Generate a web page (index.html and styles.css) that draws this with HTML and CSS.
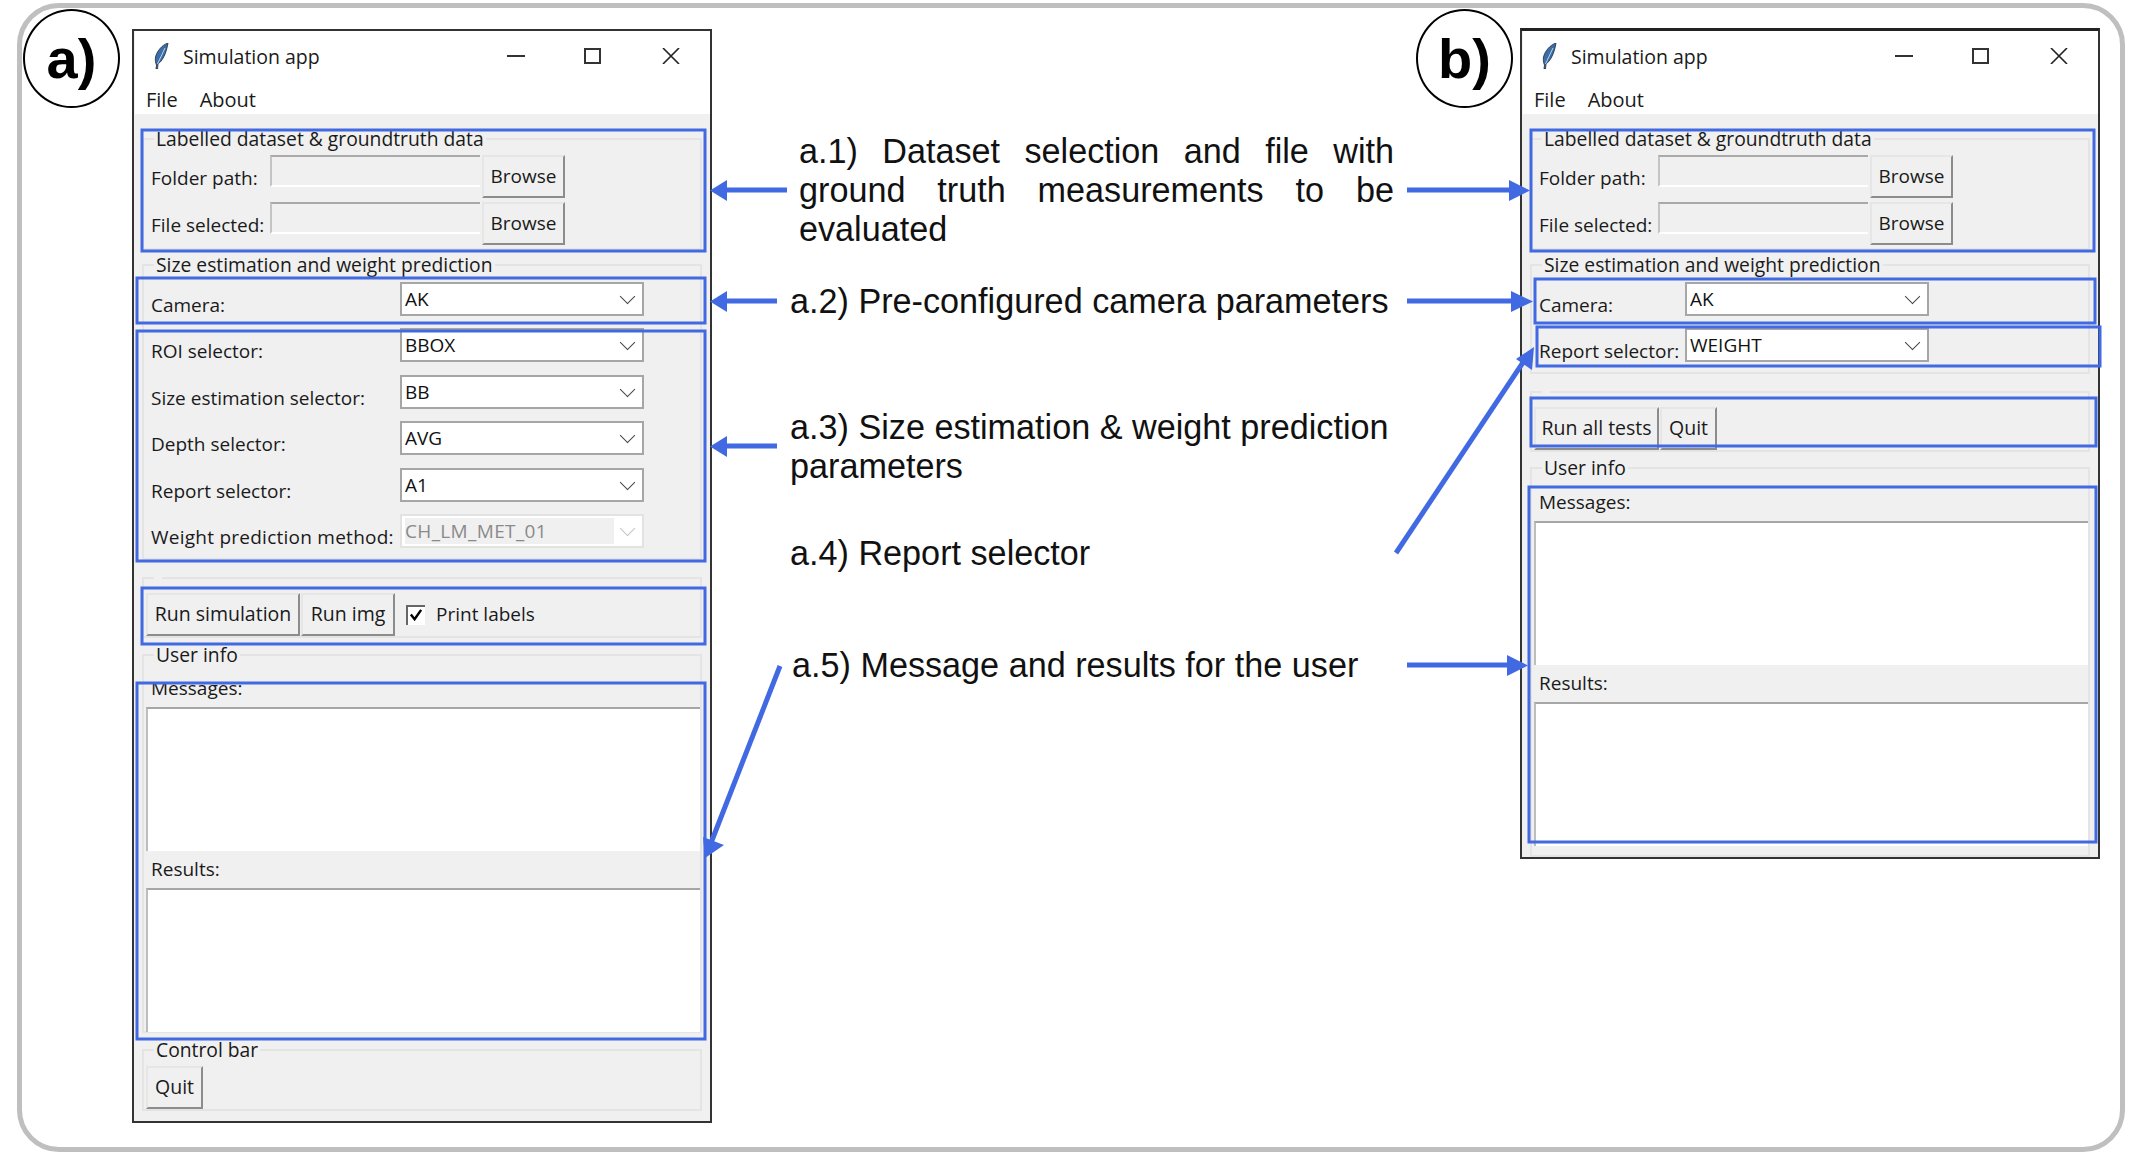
FILE: index.html
```html
<!DOCTYPE html>
<html lang="en">
<head>
    <meta charset="UTF-8">
    <title>Simulation app</title>
    <link rel="stylesheet" href="styles.css">
</head>
<body>
    <div class="figure">
        <div class="badge badge-a">a)</div>

        <!-- Window a: full simulation -->
        <div class="window window-a">
            <div class="title-bar">
                <svg class="feather" viewBox="0 0 15 26"><path d="M14 0C8 2 3 8 1.5 14 1 17 1.5 20 2.5 22L2 26H3.5L4 21C8 18 12 12 14 0Z" fill="#3b6ea8" stroke="#1c2b3a" stroke-width=".8"/><path d="M11 5 3.5 21" stroke="#b9d2ea" stroke-width="1"/></svg>
                <span class="title-text">Simulation app</span>
                <span class="win-btn win-min"></span>
                <span class="win-btn win-max"></span>
                <svg class="win-close" viewBox="0 0 18 16"><path d="M1 0 17 16M17 0 1 16" stroke="#222" stroke-width="1.6" fill="none"/></svg>
            </div>
            <div class="menu-bar"><span>File</span><span>About</span></div>

            <fieldset class="group group-dataset">
                <legend>Labelled dataset &amp; groundtruth data</legend>
                <div class="path-row">
                    <span class="field-label">Folder path:</span>
                    <span class="entry"></span>
                    <button class="btn btn-browse">Browse</button>
                </div>
                <div class="path-row">
                    <span class="field-label">File selected:</span>
                    <span class="entry"></span>
                    <button class="btn btn-browse">Browse</button>
                </div>
            </fieldset>

            <fieldset class="group group-size">
                <legend>Size estimation and weight prediction</legend>
                <div class="form-row">
                    <span class="field-label">Camera:</span>
                    <span class="combo">AK</span>
                </div>
                <div class="form-row">
                    <span class="field-label">ROI selector:</span>
                    <span class="combo">BBOX</span>
                </div>
                <div class="form-row">
                    <span class="field-label">Size estimation selector:</span>
                    <span class="combo">BB</span>
                </div>
                <div class="form-row">
                    <span class="field-label">Depth selector:</span>
                    <span class="combo">AVG</span>
                </div>
                <div class="form-row">
                    <span class="field-label">Report selector:</span>
                    <span class="combo">A1</span>
                </div>
                <div class="form-row">
                    <span class="field-label label-wide">Weight prediction method:</span>
                    <span class="combo combo-disabled"><span class="combo-value">CH_LM_MET_01</span></span>
                </div>
            </fieldset>

            <fieldset class="group group-run">
                <legend class="legend-empty"></legend>
                <div class="button-row">
                    <button class="btn btn-run-sim">Run simulation</button>
                    <button class="btn btn-run-img">Run img</button>
                    <span class="check-box"><svg viewBox="0 0 15 15"><path d="M2 7 6 12 13 2" stroke="#000" stroke-width="2.6" fill="none"/></svg></span>
                    <span class="check-label">Print labels</span>
                </div>
            </fieldset>

            <fieldset class="group group-info">
                <legend>User info</legend>
                <div class="text-label">Messages:</div>
                <div class="text-box"></div>
                <div class="text-label text-label-next">Results:</div>
                <div class="text-box"></div>
            </fieldset>

            <fieldset class="group group-control">
                <legend>Control bar</legend>
                <button class="btn btn-quit">Quit</button>
            </fieldset>
        </div>

        <!-- Notes between the windows -->
        <div class="notes">
            <p class="note note-1">a.1) Dataset selection and file with ground truth measurements to be evaluated</p>
            <p class="note note-2">a.2) Pre-configured camera parameters</p>
            <p class="note note-3">a.3) Size estimation &amp; weight prediction parameters</p>
            <p class="note note-4">a.4) Report selector</p>
            <p class="note note-5">a.5) Message and results for the user</p>
        </div>

        <div class="badge badge-b">b)</div>

        <!-- Window b: run all tests -->
        <div class="window window-b">
            <div class="title-bar">
                <svg class="feather" viewBox="0 0 15 26"><path d="M14 0C8 2 3 8 1.5 14 1 17 1.5 20 2.5 22L2 26H3.5L4 21C8 18 12 12 14 0Z" fill="#3b6ea8" stroke="#1c2b3a" stroke-width=".8"/><path d="M11 5 3.5 21" stroke="#b9d2ea" stroke-width="1"/></svg>
                <span class="title-text">Simulation app</span>
                <span class="win-btn win-min"></span>
                <span class="win-btn win-max"></span>
                <svg class="win-close" viewBox="0 0 18 16"><path d="M1 0 17 16M17 0 1 16" stroke="#222" stroke-width="1.6" fill="none"/></svg>
            </div>
            <div class="menu-bar"><span>File</span><span>About</span></div>

            <fieldset class="group group-dataset">
                <legend>Labelled dataset &amp; groundtruth data</legend>
                <div class="path-row">
                    <span class="field-label">Folder path:</span>
                    <span class="entry"></span>
                    <button class="btn btn-browse">Browse</button>
                </div>
                <div class="path-row">
                    <span class="field-label">File selected:</span>
                    <span class="entry"></span>
                    <button class="btn btn-browse">Browse</button>
                </div>
            </fieldset>

            <fieldset class="group group-size">
                <legend>Size estimation and weight prediction</legend>
                <div class="form-row">
                    <span class="field-label">Camera:</span>
                    <span class="combo">AK</span>
                </div>
                <div class="form-row">
                    <span class="field-label">Report selector:</span>
                    <span class="combo">WEIGHT</span>
                </div>
            </fieldset>

            <fieldset class="group group-run">
                <legend class="legend-empty"></legend>
                <div class="button-row">
                    <button class="btn btn-run-all">Run all tests</button>
                    <button class="btn btn-quit-small">Quit</button>
                </div>
            </fieldset>

            <fieldset class="group group-info">
                <legend>User info</legend>
                <div class="text-label">Messages:</div>
                <div class="text-box"></div>
                <div class="text-label text-label-next">Results:</div>
                <div class="text-box"></div>
            </fieldset>
        </div>
    </div>

    <!-- Blue callouts drawn over everything, in page coordinates -->
    <svg class="callouts" viewBox="0 0 2140 1167">
        <g class="callout-boxes">
            <rect x="142" y="130" width="563" height="121"/>
            <rect x="137" y="278" width="568" height="45"/>
            <rect x="137" y="331" width="568" height="230"/>
            <rect x="142" y="588" width="563" height="56"/>
            <rect x="137" y="683" width="568" height="356"/>
            <rect x="1531" y="130" width="563" height="121"/>
            <rect x="1535" y="279" width="560" height="44"/>
            <rect x="1537" y="327" width="563" height="39"/>
            <rect x="1531" y="398" width="565" height="48"/>
            <rect x="1529" y="487" width="567" height="355"/>
        </g>
        <g class="callout-lines">
            <path d="M725 190H787"/>
            <path d="M725 301H777"/>
            <path d="M725 446H777"/>
            <path d="M1407 190H1512"/>
            <path d="M1407 301H1514"/>
            <path d="M1407 665H1510"/>
            <path d="M1396 553 1526 358"/>
            <path d="M780 666 709 848"/>
        </g>
        <g class="callout-heads">
            <polygon points="710,190.500 727,180 727,201"/>
            <polygon points="710,301.500 727,291 727,312"/>
            <polygon points="710,446.500 727,436 727,457"/>
            <polygon points="1530,190.500 1509,180 1509,201"/>
            <polygon points="1533,301.500 1511,291 1511,312"/>
            <polygon points="1528,665.500 1507,655 1507,676"/>
            <polygon points="1534,347 1516,359 1532,370"/>
            <polygon points="705,858 703,837 724,845"/>
        </g>
    </svg>
</body>
</html>
```

FILE: styles.css
```css
* {
    box-sizing: border-box;
}

body {
    margin: 0;
    position: relative;
    width: 2140px;
    height: 1167px;
    overflow: hidden;
    background-color: #fff;
    font-family: "Open Sans", "Noto Sans", sans-serif;
    font-size: 19px;
    color: #1a1a1a;
}

/* Outer rounded frame */
.figure {
    display: flex;
    align-items: flex-start;
    width: 2108px;
    height: 1149px;
    margin: 3px 0 0 17px;
    padding-left: 1px;
    border: 5px solid #bfbfbf;
    border-radius: 42px;
}

.badge {
    flex: none;
    width: 97px;
    height: 99px;
    margin-top: 1px;
    border: 2px solid #000;
    border-radius: 50%;
    display: flex;
    align-items: center;
    justify-content: center;
    font-family: "Liberation Sans", sans-serif;
    font-weight: bold;
    font-size: 56px;
    color: #000;
}

/* Windows */
.window {
    flex: none;
    width: 580px;
    padding-left: 1px;
    border: 2px solid #333;
    background-color: #f0f0f0;
}

.window-a {
    height: 1094px;
    margin: 21px 0 0 12px;
}

.window-b {
    height: 831px;
    margin: 20px 0 0 7px;
    border-top-width: 3px;
    border-top-color: #222;
}

.title-bar {
    display: flex;
    align-items: center;
    height: 50px;
    padding-left: 19px;
    background-color: #fff;
    font-size: 19.500px;
}

.feather {
    width: 15px;
    height: 26px;
    margin-right: 14px;
}

.title-text {
    width: 324px;
}

.win-btn {
    display: block;
}

.win-min {
    width: 18px;
    height: 2px;
    background-color: #333;
}

.win-max {
    width: 17px;
    height: 16px;
    margin-left: 59px;
    border: 2px solid #333;
}

.win-close {
    width: 18px;
    height: 16px;
    margin-left: 61px;
}

.menu-bar {
    display: flex;
    gap: 22px;
    height: 33px;
    padding: 6px 0 0 11px;
    line-height: 26px;
    font-size: 20px;
    background-color: #fff;
}

/* Labelled frames */
.group {
    display: block;
    min-width: 0;
    width: 560px;
    margin: 0 0 0 7px;
    padding: 0;
    border: 2px solid #e4e4e4;
}

.group legend {
    height: 20px;
    margin-left: 8px;
    padding: 0 2px;
    font-size: 19.300px;
    line-height: 19px;
}

.group-dataset legend,
.group-size legend {
    margin-left: 3px;
}

.group legend.legend-empty {
    width: 8px;
    padding: 0;
}

.group-dataset {
    height: 121px;
    margin-top: 15px;
    padding: 6px 0 0 7px;
}

.group-size {
    margin-top: 5px;
    padding: 7px 0 0 7px;
}

.window-a .group-size {
    height: 305px;
}

.window-b .group-size {
    height: 119px;
}

.group-run {
    height: 70px;
    margin-top: 8px;
    padding: 5px 0 0 2px;
}

.group-info {
    padding: 0 0 0 2px;
}

.window-a .group-info {
    height: 388px;
    margin-top: 7px;
}

.window-b .group-info {
    height: 399px;
    margin-top: 6px;
}

.group-control {
    height: 71px;
    margin-top: 7px;
    padding: 6px 0 0 2px;
}

/* Form rows */
.path-row {
    display: flex;
    align-items: flex-start;
    height: 44px;
    margin-bottom: 3px;
}

.form-row {
    display: flex;
    align-items: flex-start;
    height: 46.400px;
}

.field-label {
    flex: none;
    padding-top: 13px;
    line-height: 20px;
    white-space: nowrap;
}

.label-wide {
    letter-spacing: .25px;
}

.path-row .field-label {
    width: 119px;
}

.window-a .form-row .field-label {
    width: 249px;
}

.window-b .form-row .field-label {
    width: 146px;
}

.entry {
    display: block;
    width: 210px;
    height: 32px;
    margin-right: 2px;
    background-color: #f0f0f0;
    border-top: 2px solid #a9a9a9;
    border-left: 2px solid #c4c4c4;
    border-bottom: 2px solid #fff;
}

.combo {
    display: flex;
    align-items: center;
    width: 244px;
    height: 34px;
    padding: 0 9px 0 3px;
    border: 2px solid #a6a6a6;
    background-color: #fff;
    line-height: 26px;
    color: #111;
}

.combo::after {
    content: "";
    width: 10px;
    height: 10px;
    margin: -5px 0 0 auto;
    border-right: 1.5px solid #444;
    border-bottom: 1.5px solid #444;
    transform: rotate(45deg);
}

.combo-disabled {
    border-color: #e2e2e2;
    color: #8a8a8a;
}

.combo-disabled::after {
    border-color: #c4c4c4;
}

.combo-value {
    display: block;
    width: 209px;
    letter-spacing: .35px;
    background-color: #f0f0f0;
}

/* Tk style raised buttons */
.btn {
    display: block;
    height: 43px;
    padding: 0 0 2px;
    font-family: inherit;
    font-size: 19.500px;
    color: #1a1a1a;
    background-color: #f0f0f0;
    border: 2px solid #e6e6e6;
    border-right-color: #8c8c8c;
    border-bottom-color: #8c8c8c;
}

.btn-browse {
    width: 83px;
    font-size: 19px;
}

.btn-run-sim {
    width: 154px;
    margin-right: 1px;
}

.btn-run-img {
    width: 94px;
}

.btn-run-all {
    width: 125px;
    margin-right: 1px;
}

.btn-quit-small,
.btn-quit {
    width: 57px;
}

.button-row {
    display: flex;
    align-items: center;
}

.check-box {
    display: block;
    width: 19px;
    height: 20px;
    margin-left: 11px;
    padding: 1px 0 0 1px;
    background-color: #fff;
    border-top: 2px solid #666;
    border-left: 2px solid #666;
}

.check-box svg {
    display: block;
    width: 14px;
    height: 14px;
}

.check-label {
    margin-left: 11px;
    padding-bottom: 2px;
}

/* Messages and results */
.text-label {
    height: 20px;
    margin: 13px 0 9px 5px;
    line-height: 20px;
}

.window-b .text-label {
    margin-top: 14px;
}

.text-label-next,
.window-b .text-label-next {
    margin-top: 8px;
}

.text-box {
    width: 554px;
    height: 144px;
    background-color: #fff;
    border-top: 2px solid #a6a6a6;
    border-left: 2px solid #bdbdbd;
}

/* Notes */
.notes {
    flex: none;
    width: 704px;
    padding: 124px 0 0 78px;
    font-family: "Liberation Sans", sans-serif;
    font-size: 34.200px;
    line-height: 39px;
    color: #111;
}

.note {
    margin: 0;
}

.note-1 {
    width: 595px;
    margin-left: 9px;
    text-align: justify;
}

.note-2 {
    margin-top: 33px;
}

.note-3 {
    width: 610px;
    margin-top: 87px;
}

.note-4 {
    margin-top: 48px;
}

.note-5 {
    margin-top: 73px;
    margin-left: 2px;
}

/* Overlay */
.callouts {
    position: absolute;
    top: 0;
    left: 0;
    width: 2140px;
    height: 1167px;
    pointer-events: none;
}

.callout-boxes rect {
    fill: none;
    stroke: #4169e1;
    stroke-width: 3;
}

.callout-lines path {
    fill: none;
    stroke: #4169e1;
    stroke-width: 5;
}

.callout-heads polygon {
    fill: #4169e1;
}
```
